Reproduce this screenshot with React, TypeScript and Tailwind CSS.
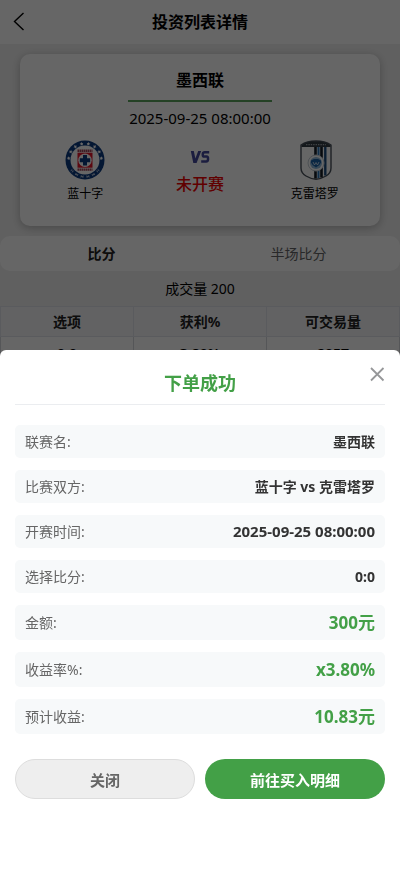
import { useState } from "react";
import clsx from "clsx";

interface OrderRow {
  label: string;
  value: string;
  kind?: "date" | "money";
}

const ORDER_ROWS: OrderRow[] = [
  { label: "联赛名:", value: "墨西联" },
  { label: "比赛双方:", value: "蓝十字 vs 克雷塔罗" },
  { label: "开赛时间:", value: "2025-09-25 08:00:00", kind: "date" },
  { label: "选择比分:", value: "0:0" },
  { label: "金额:", value: "300元", kind: "money" },
  { label: "收益率%:", value: "x3.80%", kind: "money" },
  { label: "预计收益:", value: "10.83元", kind: "money" },
];

const TABS = ["比分", "半场比分"];
const COLUMNS = ["选项", "获利%", "可交易量"];
const ODDS = [["0:0", "3.80%", "2057"]];

function HomeCrest() {
  return (
    <svg viewBox="0 0 40 40" className="size-10" aria-hidden="true">
      <circle cx="20" cy="20" r="19.5" fill="#0c3a80" />
      <circle cx="20" cy="20" r="14.5" fill="#fff" />
      {[-84, -60, -36, -12, 12, 36, 60, 84].map((angle) => (
        <path
          key={angle}
          transform={`rotate(${angle} 20 20)`}
          d="M20 1.6l.6 1.2 1.3.2-1 .9.3 1.3-1.2-.6-1.2.6.3-1.3-1-.9 1.3-.2z"
          fill="#fff"
        />
      ))}
      {[-50, -30, -10, 10, 30, 50].map((angle) => (
        <path
          key={angle}
          transform={`rotate(${angle} 20 20)`}
          d="M19 35.6v2.4M21 35.6v2.4M19 36.8h2"
          stroke="#cfd8e6"
          strokeWidth="0.7"
        />
      ))}
      <path d="M12.5 10.8h15M12.5 29.6h15" stroke="#a04a5c" strokeWidth="2.4" strokeDasharray="1.6 .4" />
      <rect x="12.5" y="12.7" width="15" height="15" fill="#e3142b" />
      <circle cx="20" cy="20.2" r="6.7" fill="#fff" />
      <path d="M18 15h4v3.2h3.2v4H22v3.2h-4v-3.2h-3.2v-4H18z" fill="#0c3a80" />
    </svg>
  );
}

function AwayCrest() {
  return (
    <svg viewBox="0 0 40 40" className="size-10" aria-hidden="true">
      <path
        d="M6 5Q12 1 21 1T36 5V28Q36 33 31 36 26 39 21 39.2 16 39 11 36 6 33 6 28Z"
        fill="#fff"
        stroke="#4a525c"
        strokeWidth="1.4"
      />
      <path d="M6.5 5.2Q12 1.2 21 1.2T35.5 5.2V7H6.5Z" fill="#333c45" />
      <path d="M11 4.7h20" stroke="#b9bec2" strokeWidth="1" strokeDasharray="1.4 1" />
      <path d="M20.5 7v31.5" stroke="#141c26" strokeWidth="2.6" />
      <path d="M23.5 7v31" stroke="#2a75b8" strokeWidth="2" />
      <path d="M26.5 7v30.5" stroke="#141c26" strokeWidth="2.6" />
      <path d="M30.3 7v28.5" stroke="#1f4f80" strokeWidth="2.4" />
      <circle cx="21" cy="23" r="8" fill="#fff" stroke="#c3cdd6" />
      <circle cx="21" cy="23" r="6" fill="#8fb9dc" />
      <path d="M16 20.5l3-1.5h4l3 1.5v2l-1.5 2.5-3.5 2.5-3.5-2.5-1.5-2.5z" fill="#1b62a7" />
      <path d="M18 22l1.5 3 1.5-2.5 1.5 2.5 1.5-3" fill="none" stroke="#dfeaf5" strokeWidth="0.8" />
    </svg>
  );
}

function VersusMark() {
  return (
    <svg viewBox="0 0 20 14" className="h-3.5 w-5" aria-label="VS" role="img">
      <path d="M.8 1h3l1.6 7.5L8.2 1h3L6.6 13H3.3z" fill="#454a9e" />
      <path
        d="M19.2 2.2h-4.6q-1.6 0-1.8 1.6v1q-.1 1.8 1.4 1.8h2.4q1.5 0 1.4 1.8v1.2q-.2 1.9-1.8 1.9h-5"
        fill="none"
        stroke="#454a9e"
        strokeWidth="2.5"
      />
    </svg>
  );
}

function MatchCard() {
  return (
    <section className="mx-5 mt-2.5 h-43 rounded-[10px] bg-white pt-3.5 shadow-[0_2px_8px_rgba(0,0,0,0.25)]">
      <h2 className="mx-auto w-2/5 border-b-2 border-[#5aa35e] pb-2 text-center text-base leading-6 font-bold">
        墨西联
      </h2>
      <p className="mt-1.5 text-center text-[15px] leading-5">2025-09-25 08:00:00</p>
      <div className="mt-3 flex px-2">
        <div className="flex flex-1 flex-col items-center">
          <HomeCrest />
          <span className="mt-1 text-xs leading-5">蓝十字</span>
        </div>
        <div className="flex flex-1 flex-col items-center pt-2.5">
          <VersusMark />
          <span className="mt-2 text-base leading-6 font-medium text-[#f00000]">未开赛</span>
        </div>
        <div className="flex flex-1 flex-col items-center">
          <AwayCrest />
          <span className="mt-1 text-xs leading-5">克雷塔罗</span>
        </div>
      </div>
    </section>
  );
}

function OddsTable() {
  return (
    <table className="w-full table-fixed border-collapse text-center text-sm">
      <thead>
        <tr className="h-[30px] bg-[#f5f6f8]">
          {COLUMNS.map((column) => (
            <th key={column} className="border border-[#e2e4ea] font-bold text-[#222]">
              {column}
            </th>
          ))}
        </tr>
      </thead>
      <tbody>
        {ODDS.map((row) => (
          <tr key={row[0]} className="h-[34px] bg-white font-bold">
            {row.map((cell) => (
              <td key={cell} className="border border-[#d5d7dc]">
                {cell}
              </td>
            ))}
          </tr>
        ))}
      </tbody>
    </table>
  );
}

function OrderSheet({ onClose }: { onClose: () => void }) {
  return (
    <div className="fixed inset-0 flex flex-col justify-end bg-black/60">
      <div
        role="dialog"
        aria-modal="true"
        aria-labelledby="order-title"
        className="relative h-3/5 overflow-y-auto rounded-t-md bg-white px-[15px] pt-5"
      >
        <button
          type="button"
          aria-label="关闭弹窗"
          onClick={onClose}
          className="absolute top-4 right-3.5 text-[#969799]"
        >
          <svg viewBox="0 0 18 18" className="size-[18px]" fill="none" stroke="currentColor" strokeWidth="1.8">
            <path d="M3 2l12.5 12.5M15.5 2L3 14.5" />
          </svg>
        </button>
        <h3
          id="order-title"
          className="border-b border-[#ebedf0] pb-2 text-center text-lg leading-[26px] font-bold text-[#43a047]"
        >
          下单成功
        </h3>
        <dl className="mt-5 flex flex-col gap-3">
          {ORDER_ROWS.map(({ label, value, kind }) => (
            <div
              key={label}
              className="flex items-center justify-between rounded-[5px] bg-[#f7f9fa] px-2.5 py-[7px] text-sm leading-[19px]"
            >
              <dt className="text-[#666]">{label}</dt>
              <dd
                className={clsx(
                  "font-bold",
                  kind === "money" ? "text-[17px] leading-[21px] text-[#43a047]" : "text-[#333]",
                  kind === "date" && "text-[15px] leading-[19px]"
                )}
              >
                {value}
              </dd>
            </div>
          ))}
        </dl>
        <div className="mt-[25px] grid grid-cols-2 gap-2.5">
          <button
            type="button"
            onClick={onClose}
            className="h-10 rounded-full border border-[#ddd] bg-[#eee] pt-0.5 text-[15px] font-bold text-[#666]"
          >
            关闭
          </button>
          <button type="button" className="h-10 rounded-full bg-[#43a047] pt-0.5 text-[15px] font-bold text-white">
            前往买入明细
          </button>
        </div>
      </div>
    </div>
  );
}

export default function App() {
  const [open, setOpen] = useState(true);
  const [tab, setTab] = useState(0);

  return (
    <div className="min-h-screen bg-[#f0f0f0] font-['Noto_Sans','Noto_Sans_CJK_SC',sans-serif] text-black">
      <header className="grid h-11 grid-cols-[40px_1fr_40px] items-center bg-white">
        <button type="button" aria-label="返回" className="flex h-10 items-center pl-3">
          <svg viewBox="0 0 14 20" className="h-5 w-3.5" fill="none" stroke="currentColor" strokeWidth="1.4">
            <path d="M11.5 1L2.5 9.5l9 8.5" />
          </svg>
        </button>
        <h1 className="text-center text-base font-bold">投资列表详情</h1>
      </header>
      <main className="flow-root">
        <MatchCard />
        <div role="tablist" className="mt-2.5 flex h-[35px] rounded-[10px] bg-white px-[3px] text-sm">
          {TABS.map((name, index) => (
            <button
              key={name}
              type="button"
              role="tab"
              aria-selected={tab === index}
              onClick={() => setTab(index)}
              className={clsx("flex-1", tab === index ? "font-bold text-[#222]" : "text-[#646566]")}
            >
              {name}
            </button>
          ))}
        </div>
        <p className="py-2 text-center text-sm leading-[19px]">成交量 200</p>
        <OddsTable />
      </main>
      {open && <OrderSheet onClose={() => setOpen(false)} />}
    </div>
  );
}
